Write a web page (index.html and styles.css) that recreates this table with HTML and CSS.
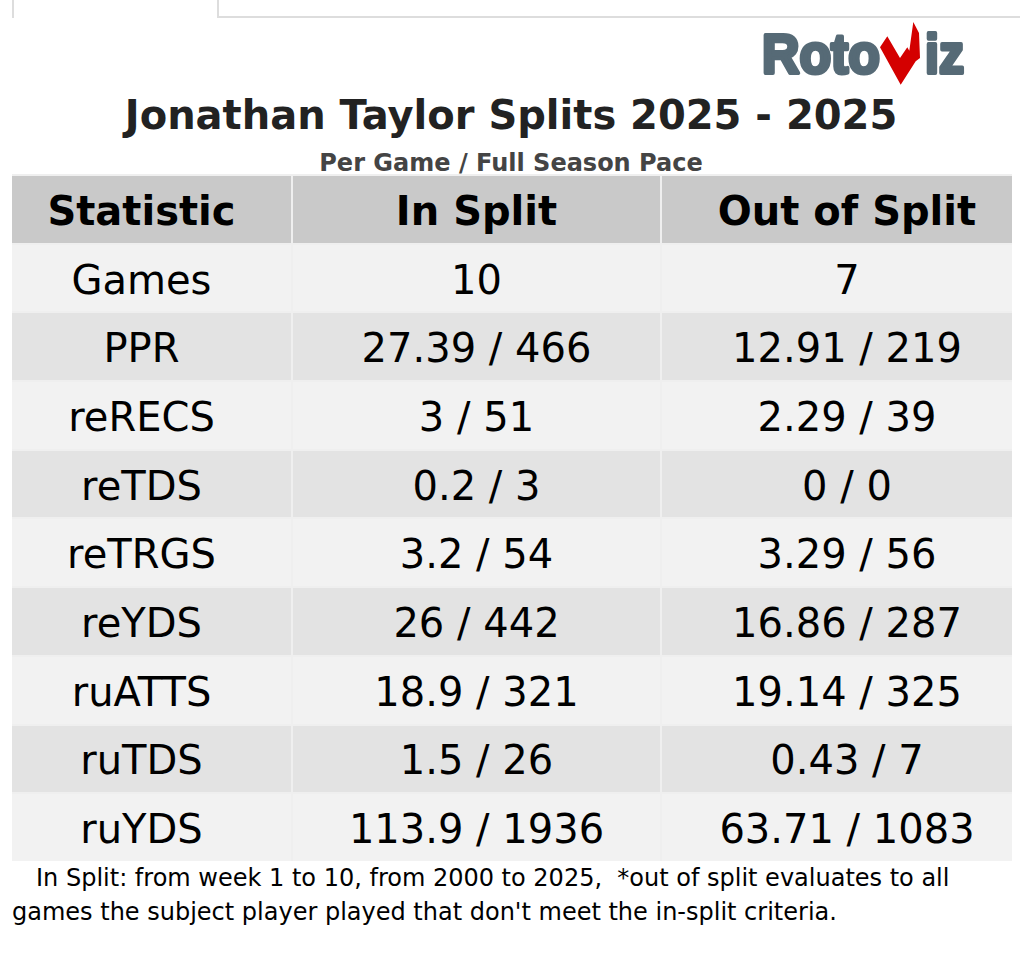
FILE: index.html
```html
<!DOCTYPE html>
<html lang="en">
<head>
<meta charset="utf-8">
<title>Jonathan Taylor Splits 2025 - 2025</title>
<link rel="stylesheet" href="styles.css">
</head>
<body>
<div class="tabbar">
  <div class="tab"></div>
  <div class="tab-fill"></div>
</div>
<div class="logo-row">
  <svg class="logo" width="210" height="68" viewBox="0 0 210 68" aria-label="RotoViz">
    <text class="logo-text" x="0" y="53" textLength="118" lengthAdjust="spacingAndGlyphs">Roto</text>
    <polygon class="logo-bolt" points="118,27.3 125.3,16.3 138,38 145.3,27.3 147.3,30.7 151.3,2 157,13 158,38 153.7,41.3 138.7,64.7"/>
    <text class="logo-text" x="163" y="53" textLength="39" lengthAdjust="spacingAndGlyphs">iz</text>
  </svg>
</div>
<h1 class="title">Jonathan Taylor Splits 2025 - 2025</h1>
<div class="subtitle">Per Game / Full Season Pace</div>
<div class="table">
  <div class="cell head c1">Statistic</div>
  <div class="cell head c2">In Split</div>
  <div class="cell head c3">Out of Split</div>

  <div class="cell odd c1">Games</div>
  <div class="cell odd c2">10</div>
  <div class="cell odd c3">7</div>

  <div class="cell even c1">PPR</div>
  <div class="cell even c2">27.39 / 466</div>
  <div class="cell even c3">12.91 / 219</div>

  <div class="cell odd c1">reRECS</div>
  <div class="cell odd c2">3 / 51</div>
  <div class="cell odd c3">2.29 / 39</div>

  <div class="cell even c1">reTDS</div>
  <div class="cell even c2">0.2 / 3</div>
  <div class="cell even c3">0 / 0</div>

  <div class="cell odd c1">reTRGS</div>
  <div class="cell odd c2">3.2 / 54</div>
  <div class="cell odd c3">3.29 / 56</div>

  <div class="cell even c1">reYDS</div>
  <div class="cell even c2">26 / 442</div>
  <div class="cell even c3">16.86 / 287</div>

  <div class="cell odd c1">ruATTS</div>
  <div class="cell odd c2">18.9 / 321</div>
  <div class="cell odd c3">19.14 / 325</div>

  <div class="cell even c1">ruTDS</div>
  <div class="cell even c2">1.5 / 26</div>
  <div class="cell even c3">0.43 / 7</div>

  <div class="cell odd c1">ruYDS</div>
  <div class="cell odd c2">113.9 / 1936</div>
  <div class="cell odd c3">63.71 / 1083</div>
</div>
<p class="note">In Split: from week 1 to 10, from 2000 to 2025,&nbsp; *out of split evaluates to all games the subject player played that don't meet the in-split criteria.</p>
</body>
</html>
```
FILE: styles.css
```css
html, body {
  margin: 0;
  padding: 0;
  background: #ffffff;
}
body {
  width: 1020px;
  font-family: "DejaVu Sans", "Liberation Sans", sans-serif;
  color: #000000;
}
.tabbar {
  display: flex;
  height: 18px;
  padding-left: 12px;
}
.tab {
  width: 203px;
  height: 18px;
  border-left: 2px solid #dddddd;
  border-right: 2px solid #dddddd;
}
.tab-fill {
  flex: 1;
  height: 16px;
  border-bottom: 2px solid #dddddd;
}
.logo-row {
  display: flex;
  justify-content: flex-end;
  padding-right: 48px;
  margin-top: 2px;
  height: 68px;
}
.logo {
  display: block;
  overflow: visible;
}
.logo-text {
  font-family: "Liberation Sans", Arial, sans-serif;
  font-weight: 700;
  font-size: 56px;
  fill: #566a76;
  stroke: #566a76;
  stroke-width: 4px;
  stroke-linejoin: round;
}
.logo-bolt {
  fill: #d40000;
}
.title {
  margin: 4px 12px 0 14px;
  font-size: 40px;
  line-height: 46px;
  font-weight: 700;
  color: #222222;
  text-align: center;
}
.subtitle {
  margin: 15px 12px 0 14px;
  font-size: 24px;
  line-height: 21px;
  font-weight: 700;
  color: #444444;
  text-align: center;
}
.table {
  display: grid;
  grid-template-columns: 279px 367px 350px;
  grid-auto-rows: 66.7px;
  gap: 2px;
  width: 1000px;
  margin: 0 0 0 12px;
  padding-top: 2px;
  background: #efefef;
}
.cell {
  display: flex;
  align-items: center;
  justify-content: center;
  padding-top: 3px;
  font-size: 40px;
  line-height: 1;
  color: #000000;
}
.c1 {
  padding-right: 20px;
}
.c3 {
  padding-left: 20px;
}
.head {
  background: #c9c9c9;
  font-weight: 700;
}
.odd {
  background: #f2f2f2;
}
.even {
  background: #e3e3e3;
}
.note {
  margin: 0 12px;
  font-size: 24px;
  line-height: 34px;
  text-indent: 24px;
  color: #000000;
}
```
